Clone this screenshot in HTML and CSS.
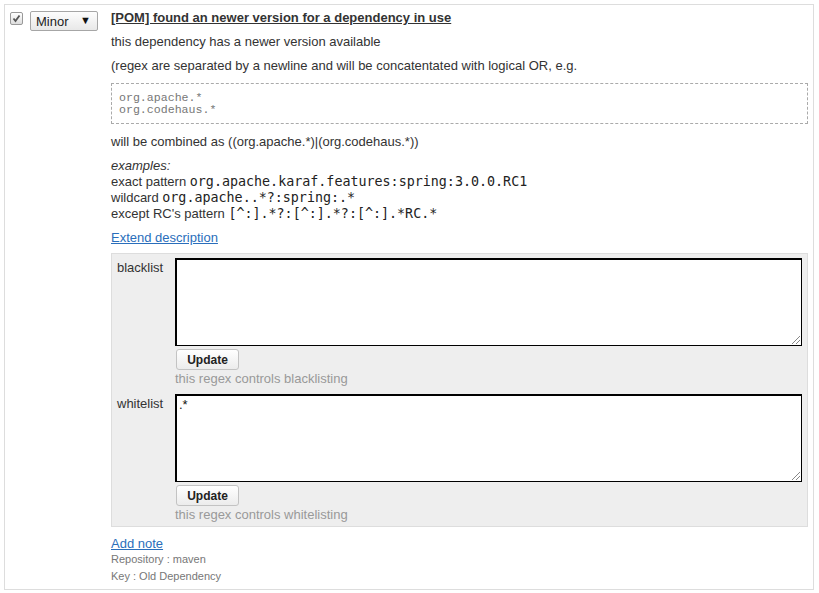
FILE: index.html
```html
<!DOCTYPE html>
<html>
<head>
<meta charset="utf-8">
<link rel="stylesheet" href="styles.css">
</head>
<body>
<div class="page">
  <div class="row">
    <div class="side">
      <span class="check"><svg width="11" height="11" viewBox="0 0 11 11"><path d="M2.5 5.5 L4.5 8 L8.5 2.5" fill="none" stroke="#555" stroke-width="1.8"/></svg></span>
      <span class="select">Minor<span class="arrow">▼</span></span>
    </div>
    <div class="main">
      <a class="title" href="#">[POM] found an newer version for a dependency in use</a>
      <p class="para">this dependency has a newer version available</p>
      <p class="para">(regex are separated by a newline and will be concatentated with logical OR, e.g.</p>
      <pre class="code">org.apache.*
org.codehaus.*</pre>
      <p class="para combined">will be combined as ((org.apache.*)|(org.codehaus.*))</p>
      <div class="examples">
        <em>examples:</em><br>
        exact pattern <code>org.apache.karaf.features:spring:3.0.0.RC1</code><br>
        wildcard <code>org.apache..*?:spring:.*</code><br>
        except RC's pattern <code>[^:].*?:[^:].*?:[^:].*RC.*</code>
      </div>
      <a class="link extend" href="#">Extend description</a>
      <div class="panel">
        <div class="label">blacklist</div>
        <div class="field">
          <div class="area"><span class="grip"></span></div>
          <span class="btn">Update</span>
          <div class="hint">this regex controls blacklisting</div>
        </div>
        <div class="label">whitelist</div>
        <div class="field">
          <div class="area"><span class="val">.*</span><span class="grip"></span></div>
          <span class="btn">Update</span>
          <div class="hint">this regex controls whitelisting</div>
        </div>
      </div>
      <a class="link note" href="#">Add note</a>
      <div class="meta first">Repository : maven</div>
      <div class="meta">Key : Old Dependency</div>
    </div>
  </div>
</div>
</body>
</html>
```
FILE: styles.css
```css
html, body { margin: 0; padding: 0; background: #fff; }
body { font-family: "Liberation Sans", Arial, sans-serif; font-size: 13px; color: #333; }
.page { padding: 4px 5px 0 4px; }
.row {
  display: flex;
  border: 1px solid #ddd;
  height: 586px;
  box-sizing: border-box;
}
.side { width: 106px; display: flex; align-items: flex-start; padding: 7px 0 0 5px; box-sizing: border-box; }
.check {
  width: 11px; height: 11px; border: 1px solid #999; border-radius: 2px;
  background: linear-gradient(#fff, #ddd); display: inline-flex;
}
.select {
  margin-left: 7px; margin-top: -1px;
  width: 68px; height: 20px; box-sizing: border-box;
  border: 1px solid #a6a6a6; border-radius: 2px;
  background: linear-gradient(#fdfdfd, #e8e8e8);
  font-size: 13px; color: #222; display: flex; align-items: center;
  padding-left: 5px; position: relative;
}
.arrow { position: absolute; right: 6px; top: 2px; font-size: 11px; color: #111; }
.main { flex: 1; padding: 5px 5px 0 0; display: flex; flex-direction: column; align-items: flex-start; }
.title { font-weight: bold; color: #333; text-decoration: underline; line-height: 16px; }
.para { margin: 8px 0 0; line-height: 16px; }
.code {
  align-self: stretch; margin: 9px 0 0;
  border: 1px dashed #aaa; padding: 8px 7px 7px;
  font-family: "Liberation Mono", "Courier New", monospace; font-size: 11.6px; line-height: 12px; color: #777;
}
.combined { margin-top: 10px; }
.examples { margin-top: 8px; line-height: 16px; }
.examples code { font-family: "DejaVu Sans Mono", monospace; font-size: 13.35px; color: #222; }
.link { color: #2a6ebb; text-decoration: underline; line-height: 16px; }
.extend { margin-top: 8px; }
.panel {
  align-self: stretch; margin-top: 7px;
  background: #eee; border: 1px solid #ddd;
  display: grid; grid-template-columns: 58px 1fr; row-gap: 7px;
  padding: 4px 5px 3px 5px;
}
.label { padding-top: 2px; line-height: 16px; }
.field { display: flex; flex-direction: column; align-items: flex-start; }
.area {
  align-self: stretch; height: 88px; box-sizing: border-box;
  background: #fff; position: relative;
  border: 1px solid #000; box-shadow: inset 1px 1px 0 #000;
}
.val { position: absolute; left: 3px; top: 2px; font-family: "Liberation Sans", Arial, sans-serif; font-size: 13px; color: #111; }
.grip {
  position: absolute; right: 1px; bottom: 1px; width: 8px; height: 8px;
  background: linear-gradient(135deg, transparent 45%, #888 45%, #888 52%, transparent 52%, transparent 70%, #888 70%, #888 77%, transparent 77%);
}
.btn {
  margin-top: 3px; margin-left: 1px;
  height: 21px; width: 63px; box-sizing: border-box;
  border: 1px solid #c3c3c3; border-radius: 3px;
  background: linear-gradient(#fff, #ececec);
  font-weight: bold; font-size: 12px; color: #222;
  display: flex; align-items: center; justify-content: center;
}
.hint { color: #999; margin-top: 1px; line-height: 16px; }
.note { margin-top: 9px; }
.meta { font-size: 11px; color: #777; line-height: 17px; }
.meta.first { margin-top: -1px; }
```
